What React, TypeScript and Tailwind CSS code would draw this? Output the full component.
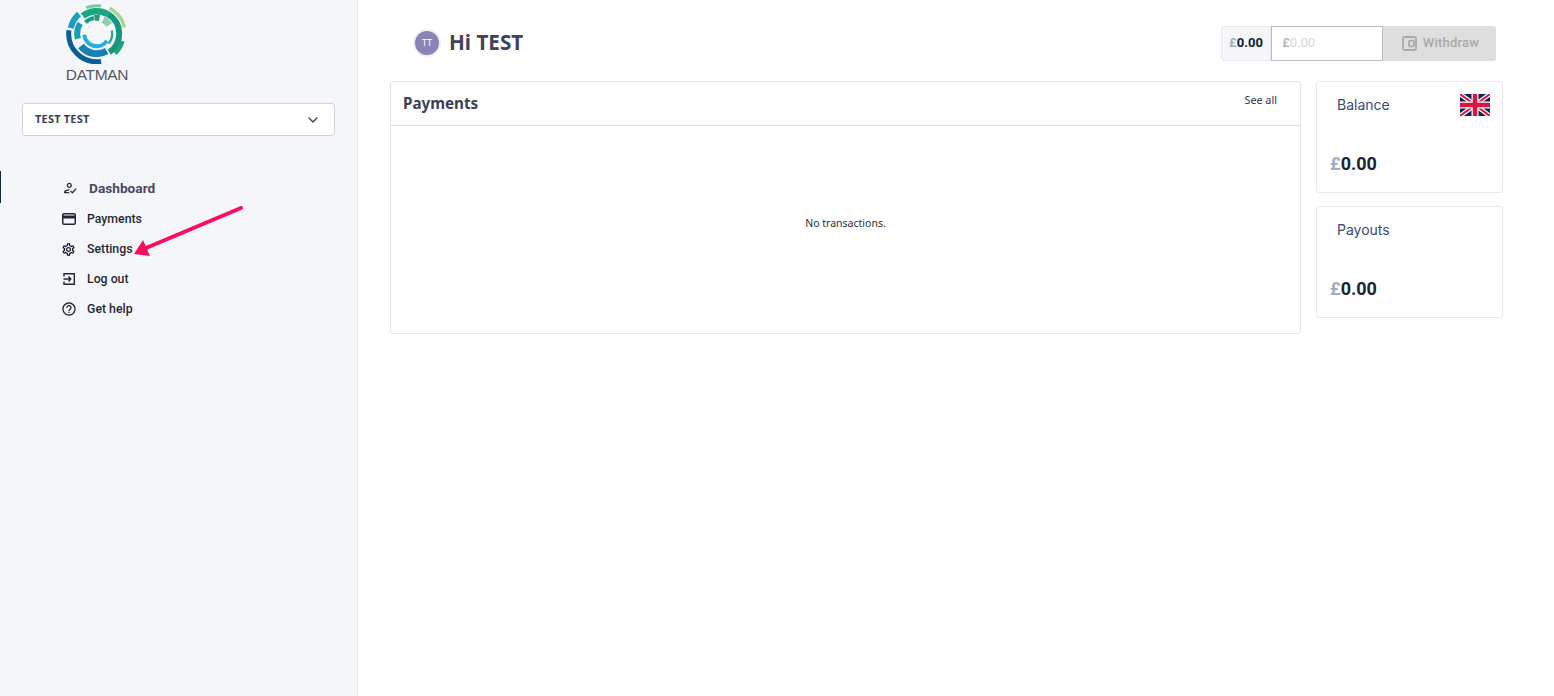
import React from 'react';
import { ChevronDown } from 'lucide-react';
import { MdOutlineHowToReg, MdOutlineSettings, MdHelpOutline } from 'react-icons/md';

function arc(cx: number, cy: number, r: number, a0: number, a1: number) {
  const p = (a: number) => {
    const t = ((a - 90) * Math.PI) / 180;
    return `${(cx + r * Math.cos(t)).toFixed(2)} ${(cy + r * Math.sin(t)).toFixed(2)}`;
  };
  return `M${p(a0)} A${r} ${r} 0 ${a1 - a0 > 180 ? 1 : 0} 1 ${p(a1)}`;
}

const logoArcs = [
  { r: 28, a0: -22, a1: 9, w: 3, c: '#7fc9a2' },
  { r: 28.5, a0: 27, a1: 77, w: 3.5, c: '#a9d48c' },
  { r: 22.5, a0: -38, a1: 30, w: 6.5, c: '#1aa583' },
  { r: 22.5, a0: 30, a1: 146, w: 6, c: '#14967f' },
  { r: 27, a0: 106, a1: 137, w: 4, c: '#1fa37a' },
  { r: 26.5, a0: 282, a1: 318, w: 6, c: '#1a9ec0' },
  { r: 28, a0: 171, a1: 277, w: 5, c: '#0b5f96' },
  { r: 20, a0: 150, a1: 232, w: 7, c: '#1780b5' },
  { r: 19.5, a0: 255, a1: 302, w: 6, c: '#16a0b8' },
  { r: 16, a0: 315, a1: 350, w: 4, c: '#14a084' },
  { r: 16, a0: 352, a1: 10, w: 6, c: '#2a9a6e' },
  { r: 15.5, a0: 25, a1: 55, w: 7, c: '#8fcfa8' },
  { r: 15.5, a0: 78, a1: 130, w: 2.2, c: '#22a78c' },
  { r: 12.5, a0: 125, a1: 265, w: 4, c: '#25aee0' },
];

function Logo() {
  return (
    <div className="flex flex-col items-center w-[66px]">
      <svg width="66" height="62" viewBox="0 0 66 62">
        {logoArcs.map((a, i) => (
          <path key={i} d={arc(32.7, 31.7, a.r, a.a0, a.a1)} fill="none" stroke={a.c} strokeWidth={a.w} />
        ))}
      </svg>
      <span className="font-['Liberation_Sans',sans-serif] text-[15.5px] leading-[16px] tracking-[-0.3px] text-[#55595f] mt-[3px]">DATMAN</span>
    </div>
  );
}

function CardIcon() {
  return (
    <svg width="14" height="12" viewBox="0 0 14 12" fill="none">
      <rect x="0.75" y="0.75" width="12.5" height="10.5" rx="1.2" stroke="#1f2933" strokeWidth="1.5" />
      <rect x="1" y="2.5" width="12" height="3" fill="#1f2933" />
    </svg>
  );
}

function LogOutIcon() {
  return (
    <svg width="14" height="14" viewBox="0 0 14 14" fill="none" stroke="#1f2933" strokeWidth="1.4">
      <path d="M2 4.5V1.7H12.3V12.3H2V9.5" />
      <path d="M1.5 7H8.8M6.4 4.6L8.8 7L6.4 9.4" />
    </svg>
  );
}

function UkFlag() {
  return (
    <svg width="30" height="22" viewBox="0 0 60 44">
      <rect width="60" height="44" fill="#14225c" />
      <path d="M0 0L60 44M60 0L0 44" stroke="#fff" strokeWidth="9" />
      <path d="M0 0L60 44M60 0L0 44" stroke="#d6173f" strokeWidth="4" />
      <path d="M30 0V44M0 22H60" stroke="#fff" strokeWidth="14" />
      <path d="M30 0V44M0 22H60" stroke="#d6173f" strokeWidth="9" />
    </svg>
  );
}

const navItems = [
  { label: 'Payments', icon: <CardIcon /> },
  { label: 'Settings', icon: <MdOutlineSettings size={15} color="#111827" /> },
  { label: 'Log out', icon: <LogOutIcon /> },
  { label: 'Get help', icon: <MdHelpOutline size={16} color="#1f2933" /> },
];

function StatCard({ title, flag }: { title: string; flag?: boolean }) {
  return (
    <div className="relative h-[112px] bg-white border border-[#e8e9ee] rounded-[3px] pl-[20px] pt-[13px]">
      <div className="font-['Inter',sans-serif] text-[14px] leading-[20px] text-[#3a4a75]">{title}</div>
      {flag && (
        <div className="absolute top-[12px] right-[12px]">
          <UkFlag />
        </div>
      )}
      <div className="absolute left-[14px] top-[71px] font-['Roboto',sans-serif] font-bold text-[18px] leading-[22px] text-[#1c2430]">
        <span className="text-[#a3adc2] -ml-[1px]">£</span>0.00
      </div>
    </div>
  );
}

export default function App() {
  return (
    <div className="relative flex h-[696px] bg-white overflow-hidden">
      <aside className="w-[358px] shrink-0 bg-[#f5f6fa] border-r border-[#e6e7ec] flex flex-col">
        <div className="pl-[64px] pt-[2px] h-[103px]">
          <Logo />
        </div>
        <div className="ml-[22px] w-[313px] h-[33px] bg-white border border-[#d2d3d6] rounded-[3px] flex items-center justify-between pl-[12px] pr-[13px]">
          <span className="font-['Noto_Sans',sans-serif] font-bold text-[11px] leading-[28px] -mt-[1px] tracking-[0.2px] text-[#3a3f55]">TEST TEST</span>
          <ChevronDown size={16} color="#3b4252" />
        </div>
        <div className="mt-[36px] flex flex-col">
          <div className="h-[32px] border-l border-[#0b2a4a] flex items-center pl-[60px] -mt-[1px]">
            <span className="w-[18px] flex justify-center mt-[1px]">
              <MdOutlineHowToReg size={16} color="#2a3140" />
            </span>
            <span className="ml-[10px] mt-[3px] font-['Roboto',sans-serif] font-bold text-[13.7px] text-[#454a64]">Dashboard</span>
          </div>
          {navItems.map((n) => (
            <div key={n.label} className="h-[30px] flex items-center pl-[60.5px] translate-y-[1px]">
              <span className="w-[16px] flex justify-center">{n.icon}</span>
              <span className="ml-[10.5px] font-['Roboto',sans-serif] font-medium text-[12.3px] text-[#1f2933]">{n.label}</span>
            </div>
          ))}
        </div>
      </aside>

      <main className="flex-1 flex flex-col pl-[32px]">
        <div className="h-[81px] flex items-center justify-between pr-[58px]">
          <div className="flex items-center pl-[23px] mt-[5px]">
            <div className="w-[28px] h-[28px] rounded-full bg-[#8a84b4] border-[2px] border-[#eef0f7] flex items-center justify-center text-white text-[9px] font-['Noto_Sans',sans-serif]">TT</div>
            <span className="ml-[8px] font-['Noto_Sans',sans-serif] font-bold text-[20.7px] text-[#40435a]">Hi TEST</span>
          </div>
          <div className="flex h-[35px] mt-[5px]">
            <div className="w-[50px] bg-[#f5f6fa] border border-[#e8e9ee] rounded-l-[3px] flex items-center justify-center font-['Roboto',sans-serif] font-bold text-[13px] text-[#0f1c33]">
              <span className="text-[#a3adc2]">£</span>0.00
            </div>
            <div className="w-[112px] border border-[#bcbcbc] flex items-center pl-[10px] font-['Roboto',sans-serif] text-[13px] text-[#d4d6da]">
              <span className="text-[#b4bac8] font-bold">£</span>0.00
            </div>
            <div className="w-[113px] bg-[#dedede] rounded-r-[3px] flex items-center justify-center gap-[6px] pl-[2px] font-['Roboto',sans-serif] font-medium text-[13px] tracking-[0.2px] text-[#a9aaac]">
              <svg width="15" height="15" viewBox="0 0 15 15" fill="none" stroke="#a9aaac" strokeWidth="1.8">
                <rect x="1" y="1" width="13" height="13" rx="1.8" />
                <rect x="7" y="4.7" width="5" height="5.6" rx="1" />
              </svg>
              Withdraw
            </div>
          </div>
        </div>
        <div className="flex gap-[15px] items-start">
          <div className="w-[911px] h-[253px] bg-white border border-[#e4e5e8] rounded-[3px] flex flex-col">
            <div className="h-[44px] border-b border-[#dedfe2] flex items-center justify-between pl-[12px] pr-[23px]">
              <span className="font-['Noto_Sans',sans-serif] font-bold text-[15.2px] -mt-[1px] text-[#3a3f5c]">Payments</span>
              <span className="font-['Noto_Sans',sans-serif] text-[10.8px] text-[#2a3550] -mt-[6px]">See all</span>
            </div>
            <div className="flex-1 flex justify-center pt-[89px] font-['Noto_Sans',sans-serif] text-[10.5px] leading-[16px] text-[#2b2f38]">No transactions.</div>
          </div>
          <div className="w-[187px] flex flex-col gap-[13px]">
            <StatCard title="Balance" flag />
            <StatCard title="Payouts" />
          </div>
        </div>
      </main>

      {/* annotation arrow */}
      <svg className="absolute left-[130px] top-[200px]" width="120" height="60" viewBox="0 0 120 60">
        <path d="M111 8L16 48" stroke="#fb0f5a" strokeWidth="4" strokeLinecap="round" />
        <path d="M4 54L13 40L20 56Z" fill="#fb0f5a" />
      </svg>
    </div>
  );
}
